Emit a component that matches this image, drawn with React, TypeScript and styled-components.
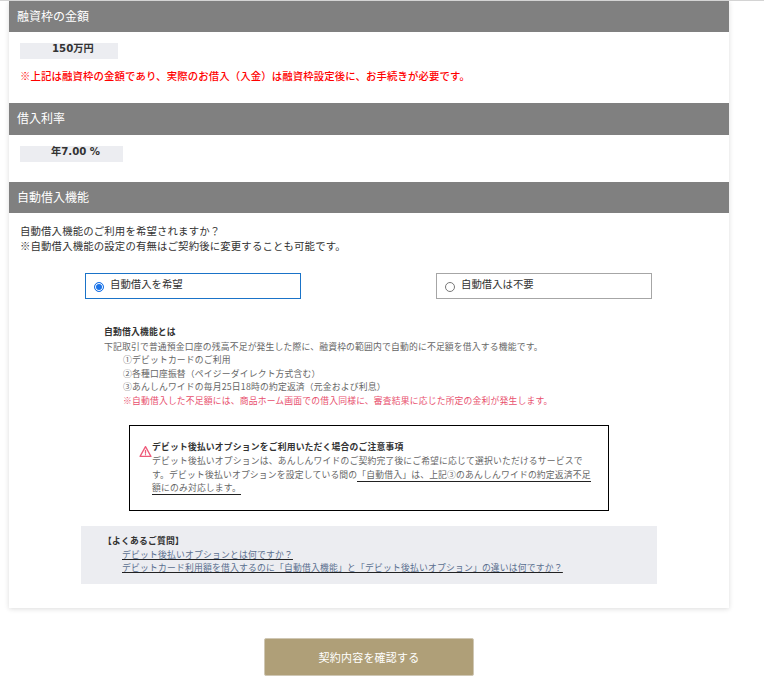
import styled, { createGlobalStyle } from 'styled-components'

const GlobalStyle = createGlobalStyle`
  html, body {
    margin: 0;
    padding: 0;
    background: #fff;
    font-family: "Noto Sans CJK JP", "Noto Sans", sans-serif;
    color: #333;
  }
`

const Page = styled.div`
  width: 764px;
  height: 697px;
  overflow: hidden;
  border-top: 1px solid #d4d4d4;
  box-sizing: border-box;
  padding-left: 9px;
`

const Card = styled.section`
  width: 720px;
  height: 607px;
  background: #fff;
  box-shadow: 0 1px 5px rgba(0, 0, 0, 0.14);
`

const SectionHeader = styled.h2<{ $height?: number }>`
  margin: 0;
  height: ${(p) => p.$height ?? 31}px;
  padding-left: 8px;
  background: #808080;
  color: #fff;
  font-size: 12px;
  font-weight: 400;
  line-height: 30px;
`

const Section = styled.div<{ $height: number }>`
  height: ${(p) => p.$height}px;
  padding: 11px 11px 0;
  box-sizing: border-box;
`

const ValueBox = styled.div<{ $width: number; $pad: number }>`
  width: ${(p) => p.$width}px;
  height: 16px;
  box-sizing: border-box;
  padding-left: ${(p) => p.$pad}px;
  background: #ecedf1;
  font-family: "DejaVu Sans", "Noto Sans CJK JP", sans-serif;
  font-size: 10.2px;
  font-weight: 700;
  line-height: 12px;
  color: #333;
`

const Alert = styled.p`
  margin: 8px 0 0;
  color: #f00;
  font-size: 10.4px;
  font-weight: 500;
  line-height: 17px;
  letter-spacing: 0.12px;
`

const Lead = styled.p`
  margin: -1px 0 0;
  font-size: 10.4px;
  line-height: 15px;
  letter-spacing: 0.15px;
  color: #333;
`

const Options = styled.div`
  display: flex;
  justify-content: space-between;
  width: 567px;
  margin: 20px 0 0 65px;
`

const Option = styled.label<{ $active?: boolean }>`
  display: flex;
  align-items: center;
  gap: 6px;
  width: 216px;
  height: 26px;
  box-sizing: border-box;
  padding: 0 0 5px 8px;
  border: 1px solid ${(p) => (p.$active ? '#1a73c8' : '#a6a6a6')};
  font-size: 10.4px;
  color: #333;
`

const Radio = styled.span<{ $active?: boolean }>`
  flex: none;
  width: 10px;
  height: 10px;
  margin-top: 6px;
  box-sizing: border-box;
  border-radius: 50%;
  border: 1px solid ${(p) => (p.$active ? '#1a73e8' : '#777')};
  background: ${(p) => (p.$active ? '#1a73e8' : '#fff')};
  box-shadow: ${(p) => (p.$active ? 'inset 0 0 0 1px #fff' : 'none')};
`

const Explain = styled.div`
  margin: 26px 0 0 84px;
  font-size: 8.8px;
  line-height: 13.5px;
  letter-spacing: 0.18px;
  color: #666;
`

const ExplainTitle = styled.div`
  font-weight: 700;
  color: #333;
  margin-bottom: 1px;
`

const Indented = styled.div<{ $alert?: boolean }>`
  padding-left: 19px;
  color: ${(p) => (p.$alert ? '#e8506e' : 'inherit')};
`

const Notice = styled.div`
  display: flex;
  width: 480px;
  height: 86px;
  margin: 18px 0 0 109px;
  box-sizing: border-box;
  padding: 14px 13px 0 9px;
  border: 1px solid #000;
  font-size: 8.8px;
  line-height: 13.8px;
  letter-spacing: 0.18px;
  color: #666;
`

const NoticeIcon = styled.svg`
  flex: none;
  width: 13px;
  height: 13px;
  margin-top: 5px;
`

const NoticeTitle = styled.div`
  font-weight: 700;
  color: #333;
`

const Underlined = styled.span`
  border-bottom: 1px solid #222;
`

const Faq = styled.div`
  width: 576px;
  height: 58px;
  margin: 15px 0 0 61px;
  box-sizing: border-box;
  padding: 8px 0 0 22px;
  background: #ecedf1;
  font-size: 8.8px;
  line-height: 13.5px;
  letter-spacing: 0.2px;
`

const FaqTitle = styled.div`
  font-weight: 700;
  color: #333;
`

const FaqLink = styled.a`
  display: block;
  width: fit-content;
  margin-left: 19px;
  color: #5a6f8f;
  text-decoration: underline;
  text-decoration-color: #222;
`

const Footer = styled.div`
  width: 720px;
  padding: 30px 0 0 255px;
  box-sizing: border-box;
`

const SubmitButton = styled.button`
  display: block;
  width: 210px;
  height: 38px;
  padding: 0;
  background: #af9f78;
  border: 1px solid #cfc7b4;
  border-radius: 2px;
  color: #fff;
  font-family: inherit;
  font-size: 11px;
  letter-spacing: 0.2px;
`

export default function App() {
  return (
    <>
      <GlobalStyle />
      <Page>
        <Card>
          <SectionHeader>融資枠の金額</SectionHeader>
          <Section $height={71}>
            <ValueBox $width={98} $pad={32}>150万円</ValueBox>
            <Alert>※上記は融資枠の金額であり、実際のお借入（入金）は融資枠設定後に、お手続きが必要です。</Alert>
          </Section>
          <SectionHeader $height={32}>借入利率</SectionHeader>
          <Section $height={47}>
            <ValueBox $width={103} $pad={31}>年7.00 %</ValueBox>
          </Section>
          <SectionHeader>自動借入機能</SectionHeader>
          <Section $height={394}>
            <Lead>
              自動借入機能のご利用を希望されますか？
              <br />
              ※自動借入機能の設定の有無はご契約後に変更することも可能です。
            </Lead>
            <Options>
              <Option $active>
                <Radio $active />
                自動借入を希望
              </Option>
              <Option>
                <Radio />
                自動借入は不要
              </Option>
            </Options>
            <Explain>
              <ExplainTitle>自動借入機能とは</ExplainTitle>
              下記取引で普通預金口座の残高不足が発生した際に、融資枠の範囲内で自動的に不足額を借入する機能です。
              <Indented>①デビットカードのご利用</Indented>
              <Indented>②各種口座振替（ペイジーダイレクト方式含む）</Indented>
              <Indented>③あんしんワイドの毎月25日18時の約定返済（元金および利息）</Indented>
              <Indented $alert>※自動借入した不足額には、商品ホーム画面での借入同様に、審査結果に応じた所定の金利が発生します。</Indented>
            </Explain>
            <Notice>
              <NoticeIcon viewBox="0 0 24 24" fill="none" stroke="#ee5a7a" strokeWidth="2.4" strokeLinejoin="round" strokeLinecap="round">
                <path d="M12 3 2 21h20L12 3Z" />
                <path d="M12 10v5M12 18v.2" />
              </NoticeIcon>
              <div>
                <NoticeTitle>デビット後払いオプションをご利用いただく場合のご注意事項</NoticeTitle>
                デビット後払いオプションは、あんしんワイドのご契約完了後にご希望に応じて選択いただけるサービスです。デビット後払いオプションを設定している間の
                <Underlined>「自動借入」は、上記③のあんしんワイドの約定返済不足額にのみ対応します。</Underlined>
              </div>
            </Notice>
            <Faq>
              <FaqTitle>【よくあるご質問】</FaqTitle>
              <FaqLink href="#">デビット後払いオプションとは何ですか？</FaqLink>
              <FaqLink href="#">デビットカード利用額を借入するのに「自動借入機能」と「デビット後払いオプション」の違いは何ですか？</FaqLink>
            </Faq>
          </Section>
        </Card>
        <Footer>
          <SubmitButton>契約内容を確認する</SubmitButton>
        </Footer>
      </Page>
    </>
  )
}
